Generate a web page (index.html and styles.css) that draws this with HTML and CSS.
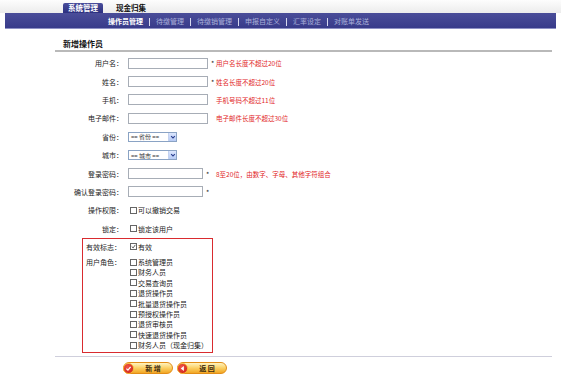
FILE: index.html
```html
<!DOCTYPE html>
<html lang="zh-CN">
  <head>
    <meta charset="utf-8">
    <title>新增操作员</title>
    <link rel="stylesheet" href="styles.css">
  </head>
  <body>
    <div class="header">
      <div class="tabs">
        <span class="tab active">系统管理</span>
        <span class="tab">现金归集</span>
      </div>
      <div class="subnav">
        <a class="current">操作员管理</a><i></i>
        <a>待缴管理</a><i></i>
        <a>待缴销管理</a><i></i>
        <a>申报自定义</a><i></i>
        <a>汇率设定</a><i></i>
        <a>对账单发送</a>
      </div>
    </div>

    <div class="main">
      <h2>新增操作员</h2>
      <div class="form">
        <div class="row">
          <label>用户名：</label>
          <div class="field"><span class="input"></span><b>*</b></div>
          <span class="hint">用户名长度不超过20位</span>
        </div>
        <div class="row">
          <label>姓名：</label>
          <div class="field"><span class="input"></span><b>*</b></div>
          <span class="hint">姓名长度不超过20位</span>
        </div>
        <div class="row">
          <label>手机：</label>
          <div class="field"><span class="input"></span></div>
          <span class="hint">手机号码不超过11位</span>
        </div>
        <div class="row">
          <label>电子邮件：</label>
          <div class="field"><span class="input"></span></div>
          <span class="hint">电子邮件长度不超过30位</span>
        </div>
        <div class="row">
          <label>省份：</label>
          <div class="field">
            <span class="select"><span class="val">== 省份 ==</span><span class="arrow"><svg viewBox="0 0 8 8" width="6" height="6"><path d="M1.5 2.8 L4 5.3 L6.5 2.8" fill="none" stroke="#2a3f8f" stroke-width="1.4"/></svg></span></span>
          </div>
        </div>
        <div class="row">
          <label>城市：</label>
          <div class="field">
            <span class="select"><span class="val">== 城市 ==</span><span class="arrow"><svg viewBox="0 0 8 8" width="6" height="6"><path d="M1.5 2.8 L4 5.3 L6.5 2.8" fill="none" stroke="#2a3f8f" stroke-width="1.4"/></svg></span></span>
          </div>
        </div>
        <div class="row">
          <label>登录密码：</label>
          <div class="field"><span class="input short"></span><b>*</b></div>
          <span class="hint">8至20位，由数字、字母、其他字符组合</span>
        </div>
        <div class="row">
          <label>确认登录密码：</label>
          <div class="field"><span class="input short"></span><b>*</b></div>
        </div>
        <div class="row">
          <label>操作权限：</label>
          <div class="field wide"><span class="cb"></span>可以撤销交易</div>
        </div>
        <div class="row">
          <label>锁定：</label>
          <div class="field wide"><span class="cb"></span>锁定该用户</div>
        </div>

        <div class="box">
          <div class="box-row first">
            <label>有效标志：</label>
            <div class="opts">
              <p><span class="cb"><svg viewBox="0 0 7 7" width="5" height="5"><path d="M1 3.5 L3 5.5 L6 1.2" fill="none" stroke="#333" stroke-width="1.1"/></svg></span>有效</p>
            </div>
          </div>
          <div class="box-row">
            <label>用户角色：</label>
            <div class="opts">
              <p><span class="cb"></span>系统管理员</p>
              <p><span class="cb"></span>财务人员</p>
              <p><span class="cb"></span>交易查询员</p>
              <p><span class="cb"></span>退货操作员</p>
              <p><span class="cb"></span>批量退货操作员</p>
              <p><span class="cb"></span>预授权操作员</p>
              <p><span class="cb"></span>退货审核员</p>
              <p><span class="cb"></span>快速退货操作员</p>
              <p><span class="cb"></span>财务人员（现金归集）</p>
            </div>
          </div>
        </div>
      </div>

      <div class="actions">
        <span class="btn">
          <span class="icon"><svg viewBox="0 0 10 10" width="7" height="7"><path d="M2 5.2 L4.2 7.4 L8 2.8" fill="none" stroke="#fff" stroke-width="1.8"/></svg></span>
          <span class="label">新 增</span>
        </span>
        <span class="btn">
          <span class="icon"><svg viewBox="0 0 10 10" width="7" height="7"><path d="M7 1.5 L2.5 5 L7 8.5 Z" fill="#fff"/></svg></span>
          <span class="label">返 回</span>
        </span>
      </div>
    </div>
  </body>
</html>
```

FILE: styles.css
```css
* {
  margin: 0;
  padding: 0;
  box-sizing: border-box;
}
body {
  font-family: "Noto Sans CJK SC", "Noto Sans", sans-serif;
  font-size: 7px;
  color: #222;
  background: #fff;
}

/* top tabs + blue bar */
.tabs {
  height: 13px;
  padding-left: 63px;
  display: flex;
  align-items: flex-end;
  background: linear-gradient(#fdfdfd, #ececec);
}
.tab {
  width: 40px;
  height: 10px;
  line-height: 10px;
  text-align: center;
  font-size: 7.5px;
  font-weight: bold;
  color: #111;
}
.tab.active {
  background: linear-gradient(#4a4e9c, #2c3080);
  color: #fff;
  border-radius: 2px 2px 0 0;
}
.tab + .tab {
  margin-left: 8px;
}
.subnav {
  margin: 0 5px;
  height: 16px;
  padding-left: 103px;
  display: flex;
  align-items: center;
  background: linear-gradient(#4a4d99, #383b8a);
  border-bottom: 1px solid #8d90c4;
}
.subnav a {
  font-size: 7px;
  color: #aab0da;
}
.subnav a.current {
  color: #fff;
  font-weight: bold;
}
.subnav i {
  width: 1px;
  height: 8px;
  margin: 2px 6px 0;
  background: #d6d8ee;
}

/* form */
.main {
  padding: 0 9px 0 55px;
}
h2 {
  margin-top: 9px;
  padding-left: 8px;
  font-size: 8px;
  line-height: 12px;
  color: #111;
  border-bottom: 2px solid #b9b9b9;
}
.form {
  margin-top: 2px;
}
.row {
  display: grid;
  grid-template-columns: 73px 88px 1fr;
  height: 18.4px;
  align-items: center;
}
.row label {
  text-align: right;
  padding-right: 5px;
}
.field {
  display: flex;
  align-items: center;
}
.field.wide {
  grid-column: 2 / 4;
}
.field b {
  font-weight: normal;
  margin-left: 3px;
  color: #222;
}
.input {
  width: 80px;
  height: 11px;
  border: 1px solid #a7adb6;
  background: #fff;
}
.input.short {
  width: 75px;
}
.hint {
  font-size: 6.5px;
  color: #e2261f;
}
.select {
  width: 49px;
  height: 10px;
  padding-left: 2px;
  display: flex;
  align-items: center;
  justify-content: space-between;
  border: 1px solid #8aa3c4;
  font-size: 6px;
  color: #333;
  white-space: nowrap;
}
.arrow {
  flex: none;
  width: 8px;
  height: 8px;
  display: flex;
  align-items: center;
  justify-content: center;
  background: linear-gradient(#dbe6fd, #b7cbf5);
  border-left: 1px solid #c4d2f0;
}
.cb {
  display: inline-flex;
  align-items: center;
  justify-content: center;
  width: 7px;
  height: 7px;
  margin: 0 1px 0 2px;
  border: 1px solid #666;
  background: #fff;
}

/* red framed block */
.box {
  margin: 0 0 0 27px;
  width: 131px;
  border: 1px solid #d92b2f;
  padding: 2px 0 2px;
}
.box-row {
  display: grid;
  grid-template-columns: 45px 1fr;
}
.box-row label {
  text-align: right;
  padding-right: 7px;
  line-height: 10.4px;
}
.box-row.first {
  height: 12px;
  align-items: center;
  margin-bottom: 4px;
}
.opts p {
  display: flex;
  align-items: center;
  height: 10.4px;
}

/* buttons */
.actions {
  margin-top: 3px;
  padding: 5px 0 0 68px;
  border-top: 1px solid #cfcfdc;
  display: flex;
  gap: 4px;
}
.btn {
  width: 50px;
  height: 12px;
  display: flex;
  align-items: center;
  border: 1px solid #e28d16;
  border-radius: 6px;
  background: linear-gradient(#fff3bf, #fbd064 50%, #f2a624);
}
.btn .icon {
  width: 11px;
  height: 11px;
  margin-left: -1px;
  display: flex;
  align-items: center;
  justify-content: center;
  border-radius: 50%;
  border: 1px solid #f6b23a;
  background: radial-gradient(circle at 40% 35%, #f2574b, #c9160f);
}
.btn .label {
  flex: 1;
  text-align: center;
  font-size: 7px;
  font-weight: bold;
  color: #3a2a10;
}
```
